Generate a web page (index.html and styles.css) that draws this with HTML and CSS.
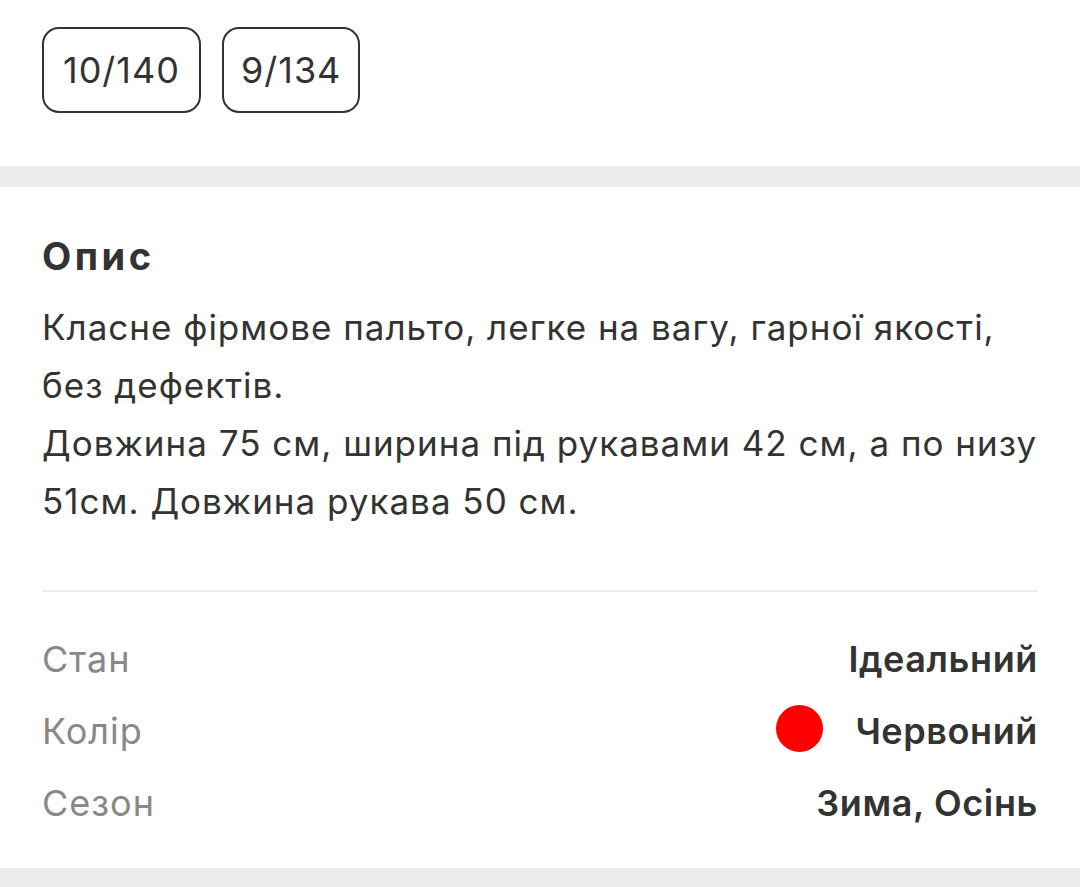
FILE: index.html
```html
<!DOCTYPE html>
<html lang="uk">
<head>
  <meta charset="UTF-8"/>
  <meta name="viewport" content="width=device-width,initial-scale=1"/>
  <title>Опис</title>
  <link rel="stylesheet" href="styles.css">
</head>
<body>
  <!-- SIZES -->
  <div class="sizes">
    <span class="chip">10/140</span>
    <span class="chip">9/134</span>
  </div>

  <div class="band"></div>

  <!-- DESCRIPTION -->
  <div class="desc">
    <h2 class="desc-title">Опис</h2>
    <p class="desc-text">
      Класне фірмове пальто, легке на вагу, гарної якості, без дефектів.<br>
      Довжина 75 см, ширина під рукавами 42 см, а по низу 51см. Довжина рукава 50 см.
    </p>

    <div class="divider"></div>

    <div class="props">
      <div class="prop-row">
        <span class="prop-label">Стан</span>
        <span class="prop-value">Ідеальний</span>
      </div>
      <div class="prop-row">
        <span class="prop-label">Колір</span>
        <span class="prop-value"><span class="color-dot"></span>Червоний</span>
      </div>
      <div class="prop-row">
        <span class="prop-label">Сезон</span>
        <span class="prop-value">Зима, Осінь</span>
      </div>
    </div>
  </div>

  <div class="band"></div>
</body>
</html>
```

FILE: styles.css
```css
/* base */
body {
  margin: 0;
  padding: 0;
  background-color: #fff;
  color: #333;
  font-family: Inter, "Noto Sans", sans-serif;
}

.sizes {
  display: flex;
  gap: 21px;
  padding: 27px 42px 53px;
}

.chip {
  display: flex;
  align-items: center;
  justify-content: center;
  box-sizing: border-box;
  height: 86px;
  padding: 0 19px;
  border: 2px solid #333;
  border-radius: 17px;
  font-size: 36px;
  letter-spacing: 1px;
  color: #333;
}

.chip + .chip {
  padding: 0 17px;
}

.band {
  height: 21px;
  background-color: #ececec;
}

.desc {
  padding: 46px 42px 29px;
}

.desc-title {
  margin: 0;
  font-size: 38px;
  font-weight: 700;
  letter-spacing: 3.5px;
  line-height: 46px;
}

.desc-text {
  margin: 19px 0 0;
  font-size: 35px;
  letter-spacing: 1px;
  line-height: 58px;
}

.divider {
  height: 2px;
  background-color: #eee;
  margin-top: 60px;
}

.props {
  margin-top: 31px;
}

.prop-row {
  display: flex;
  justify-content: space-between;
  align-items: center;
  height: 72px;
  font-size: 36px;
}

.prop-label {
  color: #888;
  letter-spacing: 1px;
}

.prop-value {
  display: flex;
  align-items: center;
  gap: 32px;
  font-weight: 600;
  letter-spacing: 0.6px;
  color: #333;
}

.color-dot {
  width: 47px;
  height: 47px;
  margin-top: -6px;
  border-radius: 50%;
  background-color: #f00;
}
```
